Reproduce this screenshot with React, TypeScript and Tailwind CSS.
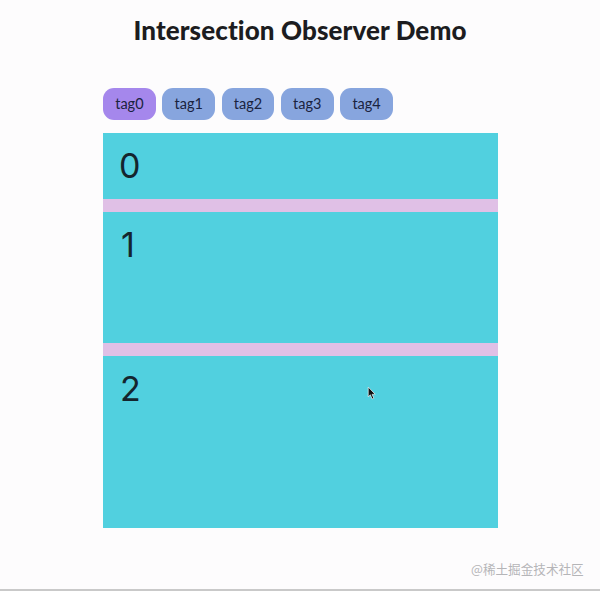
export default function App() {
  const tags = ["tag0", "tag1", "tag2", "tag3", "tag4"];
  const sections = [
    { label: "0", h: "h-[66px]", pl: "pl-[16px]" },
    { label: "1", h: "h-[131px]", pl: "pl-[18px]" },
    { label: "2", h: "h-[172px]", pl: "pl-[17px]" },
  ];
  return (
    <div className="relative h-[591px] w-[600px] overflow-hidden bg-[#fdfcfd] border-b-2 border-[#c9c9c9] font-['Inter',sans-serif]">
      <h1 className="pt-[14px] text-center text-[26px] leading-[32px] font-black tracking-[0.1px] text-[#1c1c20] font-['Lato',sans-serif]">
        Intersection Observer Demo
      </h1>
      <div className="ml-[103px] mt-[42px] flex gap-[6.5px]">
        {tags.map((t, i) => (
          <div
            key={t}
            className={`flex h-[31.5px] w-[52.8px] items-center justify-center rounded-[11px] text-[14.5px] text-[#1a2340] font-['Lato',sans-serif] ${i === 0 ? "bg-[#a587ec]" : "bg-[#87a5de]"}`}
          >
            {t}
          </div>
        ))}
      </div>
      <div className="ml-[103px] mt-[13.5px] flex w-[395px] flex-col">
        {sections.map((s, i) => (
          <div key={s.label} className="flex flex-col">
            {i > 0 && <div className="h-[13px] bg-[#e0c0e6]" />}
            <div className={`${s.h} ${s.pl} bg-[#51d0df] pt-[13px] text-[34px] leading-[40px] text-[#14252e]`}>
              {s.label}
            </div>
          </div>
        ))}
      </div>
      <svg className="absolute left-[367px] top-[386px]" width="10" height="14" viewBox="0 0 9 13">
        <path d="M1 1 L1 10 L3 8.2 L4.6 12 L6.2 11.3 L4.6 7.8 L7.4 7.6 Z" fill="#111" stroke="#fff" strokeWidth="0.6" />
      </svg>
      <div className="absolute left-[471px] top-[560px] text-[12.6px] leading-[17px] text-[#b5b5b8] font-['Noto_Sans_CJK_SC',sans-serif]">
        @稀土掘金技术社区
      </div>
    </div>
  );
}
